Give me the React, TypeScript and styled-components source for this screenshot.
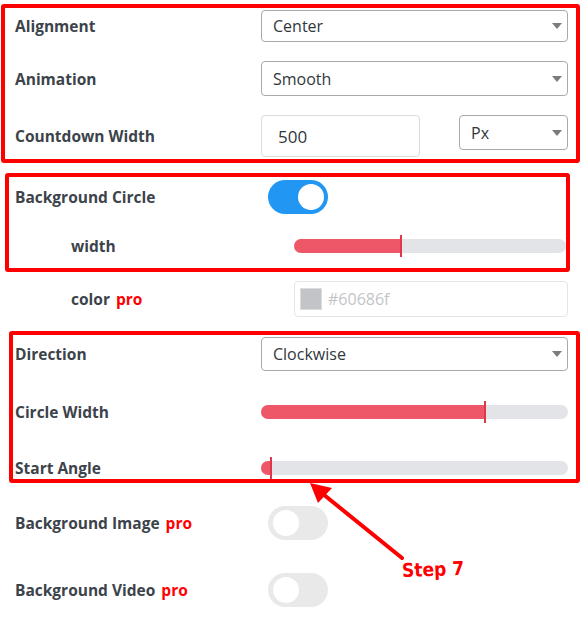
import React from 'react';
import styled, { createGlobalStyle } from 'styled-components';

const GlobalStyle = createGlobalStyle`
  body {
    margin: 0;
    background: #fff;
    font-family: "Open Sans", "Noto Sans", sans-serif;
    color: #3c434a;
  }
`;

const Page = styled.div`
  position: relative;
  width: 588px;
  height: 634px;
  padding: 4px 20px 0 15px;
  box-sizing: border-box;
  display: flex;
  flex-direction: column;
`;

interface GroupProps {
  $left: number;
  $right: number;
  $top?: number;
}

// red annotation frame that pokes out of the content column
const Group = styled.div<GroupProps>`
  display: flex;
  flex-direction: column;
  border: 4px solid #ff0000;
  border-radius: 3px;
  margin-left: -${(p) => p.$left}px;
  margin-right: -${(p) => p.$right}px;
  margin-top: ${(p) => p.$top || 0}px;
  padding-left: ${(p) => Math.max(p.$left - 4, 0)}px;
  padding-right: ${(p) => Math.max(p.$right - 4, 0)}px;
`;

const Row = styled.div<{ $gap?: number; $sub?: boolean }>`
  display: grid;
  grid-template-columns: ${(p) => (p.$sub ? '223px 1fr' : '246px 1fr')};
  align-items: center;
  margin-top: ${(p) => p.$gap || 0}px;
  padding-left: ${(p) => (p.$sub ? 56 : 0)}px;
`;

const Label = styled.label`
  font-size: 15.5px;
  line-height: 20px;
  font-weight: 700;
  color: #3c434a;
`;

const Pro = styled.span`
  color: #ff0000;
  margin-left: 6px;
`;

const SelectBox = styled.div<{ $h: number }>`
  position: relative;
  height: ${(p) => p.$h}px;
  box-sizing: border-box;
  border: 1px solid #a7aaad;
  border-radius: 4px;
  display: flex;
  align-items: center;
  padding-left: 11px;
  font-size: 16px;
  color: #32373c;
  background: #fff;
`;

const Caret = styled.span`
  position: absolute;
  right: 5px;
  top: 50%;
  margin-top: -3px;
  width: 0;
  height: 0;
  border-left: 5px solid transparent;
  border-right: 5px solid transparent;
  border-top: 6px solid #7b7b7b;
`;

const Select = ({ value, h }: { value: string; h: number }) => (
  <SelectBox $h={h}>
    {value}
    <Caret />
  </SelectBox>
);

const WidthControls = styled.div`
  display: flex;
  align-items: flex-start;
  justify-content: space-between;
`;

const NumberInput = styled.div`
  width: 159px;
  height: 42px;
  box-sizing: border-box;
  border: 1px solid #dcdcde;
  border-radius: 4px;
  padding-left: 16px;
  display: flex;
  align-items: center;
  font-size: 17px;
  color: #32373c;
`;

const UnitSelect = styled(SelectBox)`
  width: 109px;
`;

const Switch = styled.div<{ $on?: boolean }>`
  position: relative;
  width: 60px;
  height: 34px;
  margin-left: 7px;
  border-radius: 17px;
  background: ${(p) => (p.$on ? '#2196f3' : '#e9e9e9')};
`;

const Knob = styled.span<{ $on?: boolean }>`
  position: absolute;
  top: 4px;
  left: ${(p) => (p.$on ? 30 : 5)}px;
  width: 26px;
  height: 26px;
  border-radius: 50%;
  background: #fff;
`;

const SliderBox = styled.div`
  height: 22px;
  display: flex;
  flex-direction: column;
  justify-content: center;
`;

const Track = styled.div`
  position: relative;
  height: 14px;
  border-radius: 7px;
  background: #e2e4e7;
`;

const Fill = styled.div`
  height: 100%;
  border-radius: 7px 0 0 7px;
  background: #ee5768;
`;

const Thumb = styled.span`
  position: absolute;
  top: -4px;
  width: 2px;
  height: 22px;
  margin-left: -1px;
  background: #e2374a;
`;

const Slider = ({ value }: { value: number }) => (
  <SliderBox>
    <Track>
      <Fill style={{ width: `${value}%` }} />
      <Thumb style={{ left: `${value}%` }} />
    </Track>
  </SliderBox>
);

const ColorField = styled.div`
  height: 36px;
  box-sizing: border-box;
  border: 1px solid #e5e5e5;
  border-radius: 4px;
  display: flex;
  align-items: center;
  padding-left: 5px;
  gap: 6px;
  font-size: 16px;
  color: #c3c4c7;
`;

const Swatch = styled.span`
  width: 22px;
  height: 22px;
  box-sizing: border-box;
  border: 1px solid #dcdcde;
  background: #c3c4c7;
`;

const Arrow = styled.svg`
  position: absolute;
  left: 300px;
  top: 475px;
`;

const StepNote = styled.div`
  position: absolute;
  left: 402px;
  top: 558px;
  font-family: "DejaVu Sans Condensed", "DejaVu Sans", sans-serif;
  font-weight: 700;
  font-size: 19px;
  color: #ff0000;
  transform: rotate(-2deg);
`;

export default function App() {
  return (
    <>
      <GlobalStyle />
      <Page>
        <Group $left={14} $right={12}>
          <Row $gap={2}>
            <Label>Alignment</Label>
            <Select value="Center" h={32} />
          </Row>
          <Row $gap={19}>
            <Label>Animation</Label>
            <Select value="Smooth" h={35} />
          </Row>
          <Row $gap={19} style={{ marginBottom: 2 }}>
            <Label>Countdown Width</Label>
            <WidthControls>
              <NumberInput>500</NumberInput>
              <UnitSelect $h={35}>
                Px
                <Caret />
              </UnitSelect>
            </WidthControls>
          </Row>
        </Group>

        <Group $left={10} $right={2} $top={10}>
          <Row $gap={3}>
            <Label>Background Circle</Label>
            <Switch $on>
              <Knob $on />
            </Switch>
          </Row>
          <Row $gap={21} $sub style={{ marginBottom: 11 }}>
            <Label>width</Label>
            <Slider value={39.3} />
          </Row>
        </Group>

        <Row $gap={9} $sub>
          <Label>
            color<Pro>pro</Pro>
          </Label>
          <ColorField>
            <Swatch />
            #60686f
          </ColorField>
        </Row>

        <Group $left={6} $right={12} $top={14}>
          <Row $gap={2}>
            <Label>Direction</Label>
            <Select value="Clockwise" h={34} />
          </Row>
          <Row $gap={30}>
            <Label>Circle Width</Label>
            <Slider value={73} />
          </Row>
          <Row $gap={34}>
            <Label>Start Angle</Label>
            <Slider value={3.3} />
          </Row>
        </Group>

        <Row $gap={23}>
          <Label>
            Background Image<Pro>pro</Pro>
          </Label>
          <Switch>
            <Knob />
          </Switch>
        </Row>
        <Row $gap={33}>
          <Label>
            Background Video<Pro>pro</Pro>
          </Label>
          <Switch>
            <Knob />
          </Switch>
        </Row>

        <Arrow width="110" height="90" viewBox="0 0 110 90">
          <line x1="102" y1="83" x2="18" y2="15" stroke="#ff0000" strokeWidth="4" strokeLinecap="round" />
          <polygon points="10,8 18,28 32,13" fill="#ff0000" />
        </Arrow>
        <StepNote>Step 7</StepNote>
      </Page>
    </>
  );
}
